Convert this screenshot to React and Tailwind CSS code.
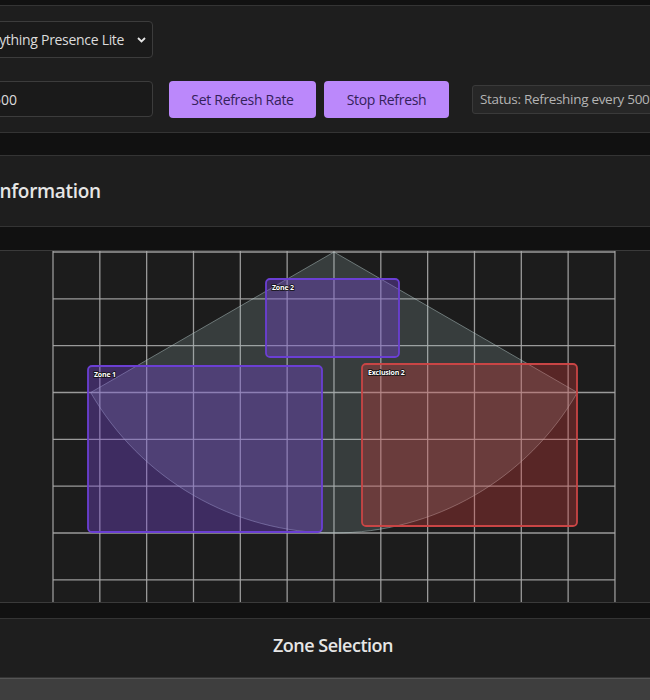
const CELL = 46.83;
const GX0 = 53;
const COLS = 12;

function RadarMap() {
  const xs = Array.from({ length: COLS + 1 }, (_, i) => GX0 + i * CELL);
  const ys = Array.from({ length: 8 }, (_, i) => 1 + i * CELL);
  const gx1 = GX0 + COLS * CELL;

  // detection cone: 120° sector, 6m radius
  const apex = { x: 334, y: 1 };
  const r = 281;
  const lx = apex.x - r * Math.sin(Math.PI / 3);
  const rx = apex.x + r * Math.sin(Math.PI / 3);
  const ly = apex.y + r * Math.cos(Math.PI / 3);
  const cone = `M${apex.x} ${apex.y} L${lx} ${ly} A${r} ${r} 0 0 0 ${rx} ${ly} Z`;

  const zones = [
    { name: "Zone 2", x: 266, y: 28, w: 133, h: 78, stroke: "#6b3fd4", fill: "rgba(118,72,210,0.38)" },
    { name: "Zone 1", x: 88, y: 115, w: 234, h: 166, stroke: "#6b3fd4", fill: "rgba(118,72,210,0.38)" },
    { name: "Exclusion 2", x: 362, y: 113, w: 215, h: 162, stroke: "#c94545", fill: "rgba(214,60,60,0.32)" },
  ];

  return (
    <svg width="650" height="351" viewBox="0 0 650 351" className="block">
      {xs.map((x) => (
        <line key={"v" + x} x1={x} y1={0} x2={x} y2={351} stroke="#a8a8a8" strokeWidth="1.3" opacity="0.9" />
      ))}
      {ys.map((y) => (
        <line key={"h" + y} x1={GX0} y1={y} x2={gx1} y2={y} stroke="#a8a8a8" strokeWidth="1.3" opacity="0.9" />
      ))}
      <path d={cone} fill="rgba(165,195,195,0.2)" stroke="rgba(190,210,210,0.45)" strokeWidth="1" />
      {zones.map((z) => (
        <g key={z.name}>
          <rect x={z.x} y={z.y} width={z.w} height={z.h} rx="4" fill={z.fill} stroke={z.stroke} strokeWidth="1.8" />
          <text
            x={z.x + 6}
            y={z.y + 11}
            fontSize="7"
            fontWeight="700"
            fill="#ffffff"
            stroke="#111"
            strokeWidth="1.6"
            paintOrder="stroke"
            fontFamily="'Open Sans', sans-serif"
            letterSpacing="-0.2"
          >
            {z.name}
          </text>
        </g>
      ))}
    </svg>
  );
}

export default function App() {
  return (
    <div className="w-[650px] h-[700px] overflow-hidden bg-[#111111] font-['Open_Sans',sans-serif] text-[#e2e2e2]">
      <div className="h-[5px]" />

      {/* controls panel */}
      <div className="h-[128px] bg-[#1e1e1e] border-y border-[#343434] overflow-hidden">
        <div className="pt-[15px]">
          <div className="-ml-[41px] w-[194px] h-[37px] rounded-[4px] border border-[#3c3c3c] bg-[#1a1a1a] flex items-center justify-between pl-[12px] pr-[6px] text-[14px] tracking-[-0.3px] text-[#dcdcdc]">
            <span>Everything Presence Lite</span>
            <svg width="9" height="6" viewBox="0 0 9 6">
              <polyline points="1,1 4.5,4.5 8,1" fill="none" stroke="#e5e5e5" strokeWidth="1.8" />
            </svg>
          </div>
          <div className="mt-[23px] flex items-center h-[36px]">
            <div className="-ml-[20px] shrink-0 w-[173px] h-[36px] rounded-[4px] border border-[#3c3c3c] bg-[#1a1a1a] flex items-center pl-[12px] text-[14px] text-[#dcdcdc]">
              500
            </div>
            <button className="ml-[16px] shrink-0 w-[147px] h-[37px] rounded-[4px] bg-[#bb88fb] text-[#34215a] text-[14px] tracking-[-0.3px]">
              Set Refresh Rate
            </button>
            <button className="ml-[8px] shrink-0 w-[125px] h-[37px] rounded-[4px] bg-[#bb88fb] text-[#34215a] text-[14px] tracking-[-0.3px]">
              Stop Refresh
            </button>
            <div className="ml-[23px] shrink-0 w-[220px] h-[29px] rounded-[3px] border border-[#3a3a3a] bg-[#272727] flex items-center pl-[7px] text-[13.5px] tracking-[-0.3px] text-[#b4b4b4] whitespace-nowrap">
              Status: Refreshing every 500ms
            </div>
          </div>
        </div>
      </div>

      {/* information panel */}
      <div className="mt-[22px] h-[72px] bg-[#1e1e1e] border-y border-[#343434] flex items-center overflow-hidden">
        <h2 className="-ml-[6px] text-[19px] font-semibold tracking-[-0.3px] text-[#e6e6e6] whitespace-nowrap">
          Information
        </h2>
      </div>

      {/* radar map */}
      <div className="mt-[23px] h-[353px] bg-[#1c1c1c] border-y border-[#3a3a3a] overflow-hidden">
        <RadarMap />
      </div>

      {/* zone selection */}
      <div className="mt-[15px] h-[60px] bg-[#1e1e1e] border-y border-[#343434] flex items-center justify-center pl-[16px] pb-[6px]">
        <h3 className="text-[18px] font-semibold tracking-[-0.5px] text-[#e6e6e6]">Zone Selection</h3>
      </div>
      <div className="h-[40px] bg-[#3e3e3e] border-t border-[#555]" />
    </div>
  );
}
